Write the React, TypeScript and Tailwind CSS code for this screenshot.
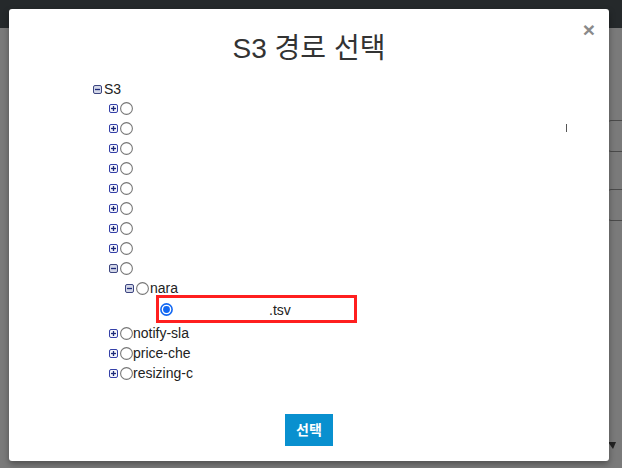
import type { ReactNode } from 'react'

const FONT = "font-['Liberation_Sans','Noto_Sans_CJK_KR',sans-serif]"

function Expander({ open }: { open: boolean }) {
  return (
    <svg width="9" height="9" viewBox="0 0 9 9" className="shrink-0">
      <rect
        x="0.5"
        y="0.5"
        width="8"
        height="8"
        rx="1.5"
        fill={open ? '#d3d7e8' : '#f4f5fb'}
        stroke={open ? '#3d4680' : '#3540a8'}
      />
      <line x1="2" y1="4.5" x2="7" y2="4.5" stroke="#1e2a7a" strokeWidth="1.3" />
      {!open && <line x1="4.5" y1="2" x2="4.5" y2="7" stroke="#1e2a7a" strokeWidth="1.3" />}
    </svg>
  )
}

function Radio({ checked = false }: { checked?: boolean }) {
  return (
    <svg width="13" height="13" viewBox="0 0 13 13" className="shrink-0">
      {checked ? (
        <>
          <circle cx="6.5" cy="6.5" r="5.6" fill="#fff" stroke="#1167f2" strokeWidth="1.6" />
          <circle cx="6.5" cy="6.5" r="3.4" fill="#1167f2" />
        </>
      ) : (
        <circle cx="6.5" cy="6.5" r="5.9" fill="#fff" stroke="#777" strokeWidth="1.1" />
      )}
    </svg>
  )
}

function Row({
  level,
  open,
  children,
}: {
  level: number
  open?: boolean
  children?: ReactNode
}) {
  const indent = ['', 'ml-[16px]', 'ml-[32px]'][level]
  return (
    <div className="flex h-[20px] items-center">
      <div className={`flex items-center gap-[2px] ${indent}`}>
        <Expander open={!!open} />
        <Radio />
      </div>
      {children}
    </div>
  )
}

export default function App() {
  return (
    <div className={`relative h-[468px] w-[622px] overflow-hidden bg-[#7a7a7a] ${FONT}`}>
      {/* page behind the overlay */}
      <div className="h-[28px] bg-[#25292b]" />
      <div className="flex flex-col pl-[607px]">
        <div className="mt-[92px] h-[32px] w-[80px] rounded-[4px] border border-[#4a4a4a]" />
        <div className="mt-[37px] h-[32px] w-[80px] rounded-[4px] border border-[#4a4a4a]" />
        <svg width="10" height="9" viewBox="0 0 10 9" className="mt-[220px] ml-[1px]">
          <path d="M0 1h8l-3 7z" fill="#222" />
        </svg>
      </div>

      {/* modal */}
      <div className="absolute left-[9px] top-[9px] flex h-[452px] w-[600px] flex-col rounded-[3px] bg-white shadow-[0_3px_6px_rgba(0,0,0,0.35)]">
        <button className="absolute right-[14px] top-[10px] text-[21px] leading-[22px] font-bold text-[#8a8a8a]">
          ×
        </button>
        <h1 className="pt-[23px] text-center text-[28px] leading-[34px] text-[#333]">S3 경로 선택</h1>

        <div className="relative mt-[14px] pl-[84px] text-[14px] text-[#222]">
          <div className="flex h-[18px] items-center gap-[2px]">
            <Expander open />
            <span>S3</span>
          </div>
          <Row level={1} />
          <Row level={1}>
            <span className="ml-auto mr-[42px] h-[8px] w-px bg-[#555]" />
          </Row>
          <Row level={1} />
          <Row level={1} />
          <Row level={1} />
          <Row level={1} />
          <Row level={1} />
          <Row level={1} />
          <Row level={1} open />
          <Row level={2} open>
            <span className="ml-[1px]">nara</span>
          </Row>
          <div className="flex h-[25px] items-start pt-[5px]">
            <div className="ml-[67px]">
              <Radio checked />
            </div>
            <span className="ml-[96px] whitespace-nowrap leading-[14px]">.tsv</span>
          </div>
          <Row level={1}>
            <span className="whitespace-nowrap">notify-sla</span>
          </Row>
          <Row level={1}>
            <span className="whitespace-nowrap">price-che</span>
          </Row>
          <Row level={1}>
            <span className="whitespace-nowrap">resizing-c</span>
          </Row>

          {/* annotation box drawn over the selected row */}
          <div className="absolute left-[147px] top-[215px] h-[28px] w-[201px] border-[3px] border-[#ff1f1f]" />
        </div>

        <div className="mt-auto flex justify-center pb-[15px]">
          <button className="h-[32px] w-[48px] bg-[#0990cf] text-[14px] font-bold text-white">선택</button>
        </div>
      </div>
    </div>
  )
}
